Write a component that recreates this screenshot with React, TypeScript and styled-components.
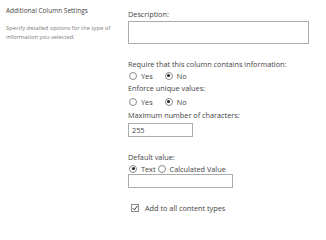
import React from "react";
import styled, { createGlobalStyle } from "styled-components";

const Global = createGlobalStyle`
  html, body { margin: 0; padding: 0; background: #ffffff; }
  body { font-family: "Open Sans", "Noto Sans", "DejaVu Sans", sans-serif; }
  #root { width: 326px; height: 223px; overflow: hidden; }
`;

const Page = styled.div`
  display: flex;
  width: 326px;
  height: 223px;
`;

const Side = styled.div`
  width: 122px;
  padding: 6px 0 0 6px;
  box-sizing: border-box;
  flex-shrink: 0;
`;

const SideTitle = styled.div`
  font-size: 6.5px;
  line-height: 10px;
  color: #444444;
`;

const SideText = styled.div`
  margin-top: 8px;
  font-size: 5.8px;
  line-height: 9px;
  color: #7a7a7a;
`;

const Main = styled.div`
  display: flex;
  flex-direction: column;
  align-items: flex-start;
  padding-left: 6px;
`;

const Label = styled.div<{ $top: number }>`
  margin-top: ${(p) => p.$top}px;
  font-size: 7.3px;
  line-height: 11px;
  color: #444444;
  white-space: nowrap;
`;

const Box = styled.div<{ $top: number; $w: number; $h: number }>`
  margin-top: ${(p) => p.$top}px;
  width: ${(p) => p.$w}px;
  height: ${(p) => p.$h}px;
  box-sizing: border-box;
  border: 1px solid #ababab;
  background: #ffffff;
  font-size: 7.3px;
  line-height: ${(p) => p.$h - 2}px;
  padding-left: 3px;
  color: #444444;
`;

const Row = styled.div<{ $top: number }>`
  margin-top: ${(p) => p.$top}px;
  display: flex;
  align-items: center;
  height: 11px;
  padding-left: 1px;
  font-size: 7.3px;
  color: #444444;
  white-space: nowrap;
`;

const Radio = styled.span<{ $on?: boolean }>`
  display: inline-block;
  width: 8px;
  height: 8px;
  box-sizing: border-box;
  border-radius: 50%;
  border: 1px solid #8a8a8a;
  background: #ffffff;
  position: relative;
  margin-right: 4px;
  &::after {
    content: "";
    display: ${(p) => (p.$on ? "block" : "none")};
    position: absolute;
    left: 1.5px;
    top: 1.5px;
    width: 3px;
    height: 3px;
    border-radius: 50%;
    background: #222222;
  }
`;

const Option = styled.span<{ $gap: number }>`
  display: inline-flex;
  align-items: center;
  margin-right: ${(p) => p.$gap}px;
`;

const Check = styled.span`
  display: inline-flex;
  width: 8px;
  height: 8px;
  box-sizing: border-box;
  border: 1px solid #8a8a8a;
  background: #ffffff;
  margin-left: 2px;
  margin-right: 6px;
  align-items: center;
  justify-content: center;
`;

export default function App() {
  return (
    <>
      <Global />
      <Page>
        <Side>
          <SideTitle>Additional Column Settings</SideTitle>
          <SideText>
            Specify detailed options for the type of
            <br />
            information you selected.
          </SideText>
        </Side>
        <Main>
          <Label $top={9}>Description:</Label>
          <Box $top={1} $w={181} $h={23} />
          <Label $top={15}>Require that this column contains information:</Label>
          <Row $top={0}>
            <Option $gap={12}>
              <Radio />
              Yes
            </Option>
            <Option $gap={0}>
              <Radio $on />
              No
            </Option>
          </Row>
          <Label $top={2}>Enforce unique values:</Label>
          <Row $top={2}>
            <Option $gap={12}>
              <Radio />
              Yes
            </Option>
            <Option $gap={0}>
              <Radio $on />
              No
            </Option>
          </Row>
          <Label $top={3}>Maximum number of characters:</Label>
          <Box $top={2} $w={65} $h={14}>255</Box>
          <Label $top={15}>Default value:</Label>
          <Row $top={0}>
            <Option $gap={2}>
              <Radio $on />
              Text
            </Option>
            <Option $gap={0}>
              <Radio />
              Calculated Value
            </Option>
          </Row>
          <Box $top={0} $w={105} $h={14} />
          <Row $top={14}>
            <Check>
              <svg width="6" height="6" viewBox="0 0 6 6">
                <path d="M0.8 3.2 L2.4 4.8 L5.4 1" fill="none" stroke="#333" strokeWidth="1" />
              </svg>
            </Check>
            Add to all content types
          </Row>
        </Main>
      </Page>
    </>
  );
}
